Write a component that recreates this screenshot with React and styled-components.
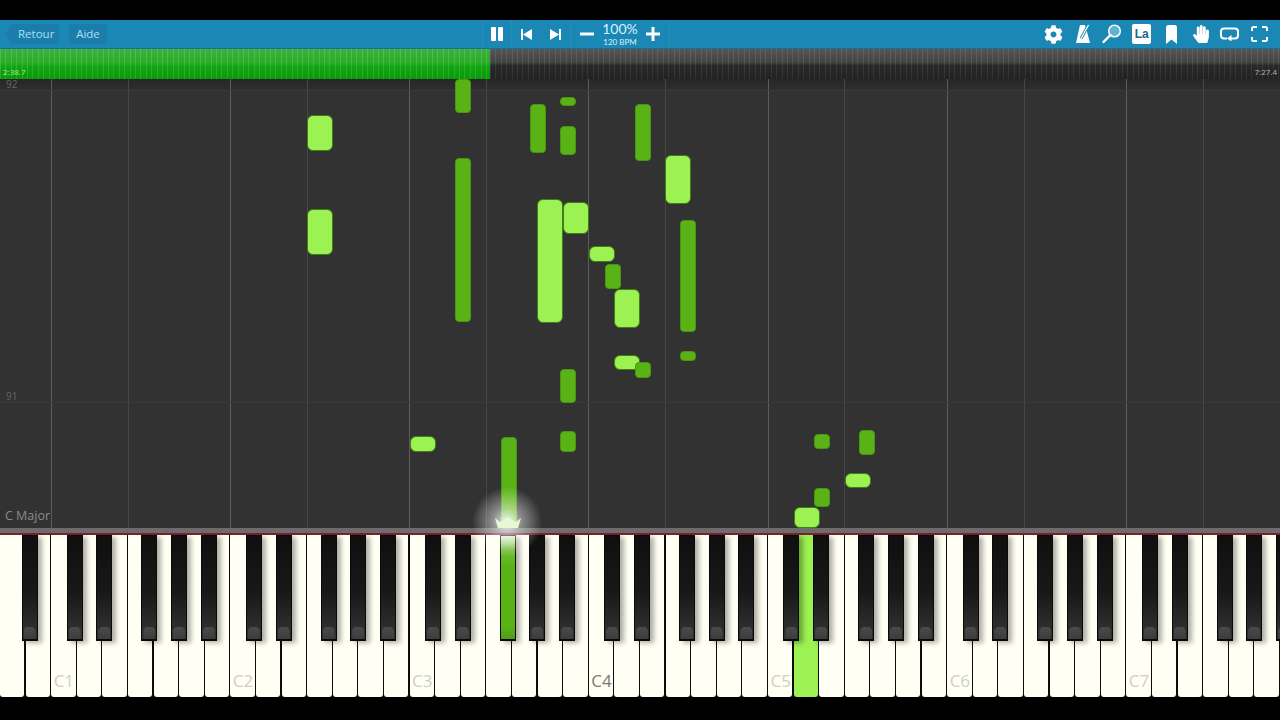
import React from 'react';
import styled, {createGlobalStyle} from 'styled-components';
import {FaCog, FaHandPaper} from 'react-icons/fa';

const WHITE_W = 25.6;
const OCTAVE = WHITE_W * 7;
const FIRST_C = WHITE_W * 2;
const CANVAS_TOP = 79;

const lightNotes = [
  [307, 115, 36], [307, 209, 46], [409.5, 436, 16], [537, 199, 124], [563, 202, 32],
  [588.5, 246, 16], [614, 289, 39], [614, 355, 15], [665, 155, 49], [793.5, 507, 21], [844.5, 473, 15],
];

const darkNotes = [
  [455, 79, 34], [455, 158, 164], [530, 104, 49], [559.5, 97, 9], [559.5, 126, 29],
  [634.5, 104, 57], [679.5, 220, 112], [604.5, 264, 25], [634.5, 362, 16], [679.5, 351, 10],
  [559.5, 369, 34], [559.5, 431, 21], [500.5, 437, 91], [814, 434, 15], [814, 488, 19], [859, 430, 25],
];

const blackOffsets = [15.4, 45.2, 90.2, 119.8, 149.6];
const blackKeys = [];
for (let o = -1; o < 7; o++) {
  blackOffsets.forEach(off => {
    const x = FIRST_C + o * OCTAVE + off;
    if (x > 0) blackKeys.push(x);
  });
}

const cLines = [0, 1, 2, 3, 4, 5, 6].map(o => FIRST_C + o * OCTAVE - 0.5);
const fLines = [0, 1, 2, 3, 4, 5, 6].map(o => FIRST_C + o * OCTAVE + WHITE_W * 3 - 0.5);

const labels = {2: 'C1', 9: 'C2', 16: 'C3', 23: 'C4', 30: 'C5', 37: 'C6', 44: 'C7'};

const App = () => {
  return (
    <Page>
      <GlobalStyle />
      <Letterbox $h={20} />
      <Toolbar>
        <LeftTools>
          <BackButton>Retour</BackButton>
          <HelpButton>Aide</HelpButton>
        </LeftTools>
        <CenterTools>
          <Cell $w={29}>
            <svg width="12" height="14" viewBox="0 0 12 14"><path d="M0 1a1 1 0 0 1 1-1h3a1 1 0 0 1 1 1v12a1 1 0 0 1-1 1H1a1 1 0 0 1-1-1zM7 1a1 1 0 0 1 1-1h3a1 1 0 0 1 1 1v12a1 1 0 0 1-1 1H8a1 1 0 0 1-1-1z" fill="#fff" /></svg>
          </Cell>
          <Cell $w={59} $gap={18}>
            <svg width="11" height="11" viewBox="0 0 11 11"><path d="M0 0h2v11H0zM11 0v11L2 5.5z" fill="#fff" /></svg>
            <svg width="11" height="11" viewBox="0 0 11 11"><path d="M9 0h2v11H9zM0 0v11l9-5.5z" fill="#fff" /></svg>
          </Cell>
          <Cell $w={99} $between>
            <svg width="14" height="14" viewBox="0 0 14 14"><rect y="5.5" width="14" height="3" rx=".5" fill="#fff" /></svg>
            <Tempo>
              <TempoValue>100%</TempoValue>
              <TempoBpm>120 BPM</TempoBpm>
            </Tempo>
            <svg width="14" height="14" viewBox="0 0 14 14"><path d="M5.5 0h3v5.5H14v3H8.500V14h-3V8.500H0v-3h5.500z" fill="#fff" /></svg>
          </Cell>
        </CenterTools>
        <RightTools>
          <ToolIcon><FaCog size={19} color="#fff" /></ToolIcon>
          <ToolIcon>
            <svg width="16" height="20" viewBox="0 0 16 20">
              <path d="M5 1h5l1 4-5.500 8 2 0L11.500 6 15 19H1z" fill="#fff" />
              <path d="M6 14.500 13.500 1" stroke="#1b87b4" strokeWidth="3" />
              <path d="M6 14.500 13.500 1" stroke="#fff" strokeWidth="1.300" />
            </svg>
          </ToolIcon>
          <ToolIcon>
            <svg width="20" height="20" viewBox="0 0 20 20">
              <circle cx="12.500" cy="7" r="5.800" fill="#5fb4d6" stroke="#fff" strokeWidth="1.500" />
              <path d="M8.300 11.200 1.500 18" stroke="#fff" strokeWidth="2.400" strokeLinecap="round" />
            </svg>
          </ToolIcon>
          <ToolIcon><LangBox>La</LangBox></ToolIcon>
          <ToolIcon>
            <svg width="11" height="19" viewBox="0 0 11 19"><path d="M0 2.500Q0 0 2.500 0h6Q11 0 11 2.500V19L5.500 14.500 0 19z" fill="#fff" /></svg>
          </ToolIcon>
          <ToolIcon><FaHandPaper size={18} color="#fff" /></ToolIcon>
          <ToolIcon>
            <svg width="19" height="14" viewBox="0 0 19 14" fill="none">
              <path d="M7 11.500H4Q1 11.500 1 8.500V4.500Q1 1.500 4 1.500h11Q18 1.500 18 4.500v4Q18 11.500 15 11.500h-4" stroke="#fff" strokeWidth="2" />
              <path d="M11.500 8v6.500L7 11.500z" fill="#fff" />
            </svg>
          </ToolIcon>
          <ToolIcon>
            <svg width="17" height="16" viewBox="0 0 17 16" fill="none" stroke="#fff" strokeWidth="2">
              <path d="M1 5V2.500Q1 1 2.500 1H6M11 1h3.500Q16 1 16 2.500V5M16 11v2.500q0 1.500-1.500 1.500H11M6 15H2.500Q1 15 1 13.500V11" />
            </svg>
          </ToolIcon>
        </RightTools>
      </Toolbar>
      <Progress>
        <Played><TimeLabel>2:38.7</TimeLabel></Played>
        <Remaining><TimeLabel $grey>7:27.4</TimeLabel></Remaining>
      </Progress>
      <Canvas>
        {cLines.map(x => <VLine key={x} $x={x} $strong />)}
        {fLines.map(x => <VLine key={x} $x={x} />)}
        <HLine $y={11} />
        <HLine $y={323} />
        <Measure $y={-1}>92</Measure>
        <Measure $y={311}>91</Measure>
        <KeySignature>C Major</KeySignature>
        {lightNotes.map(([x, y, h], i) => <LightNote key={i} $x={x} $y={y - CANVAS_TOP} $h={h} />)}
        {darkNotes.map(([x, y, h], i) => <DarkNote key={i} $x={x} $y={y - CANVAS_TOP} $h={h} />)}
        <Glow />
        <Sparkle width="26" height="11" viewBox="0 0 26 11">
          <path d="M0 1 5 5 8 3 13 0 18 3 21 5 26 1 23 11H3z" fill="#e6f8d4" />
        </Sparkle>
      </Canvas>
      <Rail />
      <Piano>
        <WhiteRow>
          {Array.from({length: 50}, (_, i) => (
            <WhiteKey key={i} $active={i === 31}>
              {labels[i] && <KeyLabel $dark={i === 23}>{labels[i]}</KeyLabel>}
            </WhiteKey>
          ))}
        </WhiteRow>
        {blackKeys.map(x => <BlackKey key={x} $x={x} $active={Math.abs(x - 499.8) < 1} />)}
      </Piano>
      <Letterbox $h={23} />
    </Page>
  );
};
export default App;

const GlobalStyle = createGlobalStyle`
  html, body {
    margin: 0;
    padding: 0;
    background: #000;
    overflow: hidden;
  }
`;

const Page = styled.div`
  width: 1280px;
  height: 720px;
  display: flex;
  flex-direction: column;
  font-family: "Open Sans", "Liberation Sans", sans-serif;
  overflow: hidden;
`;

const Letterbox = styled.div`
  height: ${p => p.$h}px;
  flex: none;
  background: #000;
`;

const Toolbar = styled.div`
  height: 29px;
  box-sizing: border-box;
  flex: none;
  display: flex;
  align-items: stretch;
  background: #1b87b4;
  border-bottom: 1px solid #17719a;
`;

const LeftTools = styled.div`
  width: 482px;
  flex: none;
  display: flex;
  align-items: center;
  gap: 10px;
  padding-left: 5px;
  box-sizing: border-box;
`;

const BackButton = styled.div`
  width: 54px;
  height: 20px;
  box-sizing: border-box;
  padding-left: 13px;
  background: #1c7dab;
  color: #a8e0f5;
  font-size: 11.500px;
  line-height: 20px;
  clip-path: polygon(7px 0, 100% 0, 100% 100%, 7px 100%, 0 50%);
`;

const HelpButton = styled.div`
  width: 38px;
  height: 20px;
  text-align: center;
  background: #1c7dab;
  border-radius: 2px;
  color: #a8e0f5;
  font-size: 11.500px;
  line-height: 20px;
`;

const CenterTools = styled.div`
  display: flex;
  align-items: stretch;
  border-left: 1px solid #258fbb;
`;

const Cell = styled.div`
  width: ${p => p.$w}px;
  box-sizing: border-box;
  display: flex;
  align-items: center;
  justify-content: ${p => (p.$between ? 'space-between' : 'center')};
  gap: ${p => p.$gap || 0}px;
  padding: ${p => (p.$between ? '0 9px 0 9px' : '0')};
  border-right: 1px solid #258fbb;
`;

const Tempo = styled.div`
  display: flex;
  flex-direction: column;
  align-items: center;
  color: #d8f2fc;
  font-family: Lato, "Open Sans", sans-serif;
`;

const TempoValue = styled.span`
  font-size: 14px;
  line-height: 16px;
`;

const TempoBpm = styled.span`
  font-size: 8px;
  line-height: 10px;
`;

const RightTools = styled.div`
  margin-left: auto;
  display: flex;
  align-items: center;
  padding-right: 6px;
`;

const ToolIcon = styled.div`
  width: 29.400px;
  height: 28px;
  display: flex;
  align-items: center;
  justify-content: center;
`;

const LangBox = styled.div`
  width: 19px;
  height: 20px;
  border-radius: 2px;
  background: #fff;
  color: #17698d;
  font-family: "Liberation Sans", sans-serif;
  font-size: 12px;
  font-weight: 700;
  line-height: 21px;
  text-align: center;
`;

const Progress = styled.div`
  height: 30px;
  flex: none;
  display: flex;
`;

const Played = styled.div`
  width: 490px;
  flex: none;
  display: flex;
  align-items: flex-end;
  padding: 0 0 1px 3px;
  box-sizing: border-box;
  background:
    repeating-linear-gradient(90deg, rgba(255, 255, 255, .1) 0 1px, rgba(0, 0, 0, .05) 1px 5.400px),
    linear-gradient(180deg, #3fb83f 0%, #2eb52e 45%, #12ad12 60%, #0aa00a 100%);
`;

const Remaining = styled.div`
  flex: 1;
  display: flex;
  align-items: flex-end;
  justify-content: flex-end;
  padding: 0 3px 1px 0;
  background:
    repeating-linear-gradient(90deg, rgba(255, 255, 255, .07) 0 1px, rgba(0, 0, 0, .06) 1px 5.400px),
    linear-gradient(180deg, #5a5a5a 0%, #474747 45%, #2b2b2b 55%, #232323 100%);
`;

const TimeLabel = styled.span`
  color: ${p => (p.$grey ? '#b5b5b5' : '#a8ea9c')};
  font-size: 8px;
  line-height: 12px;
`;

const Canvas = styled.div`
  position: relative;
  height: 449px;
  flex: none;
  background: linear-gradient(180deg, #262626 0, #323232 14px);
  z-index: 2;
`;

const VLine = styled.div`
  position: absolute;
  left: ${p => p.$x}px;
  top: 0;
  bottom: 0;
  width: 1px;
  background: ${p => (p.$strong ? '#5c5c5c' : '#464646')};
`;

const HLine = styled.div`
  position: absolute;
  left: 0;
  right: 0;
  top: ${p => p.$y}px;
  height: 1px;
  background: #3b3b3b;
`;

const Measure = styled.span`
  position: absolute;
  left: 6px;
  top: ${p => p.$y}px;
  color: #666;
  font-size: 10px;
  line-height: 12px;
`;

const KeySignature = styled.span`
  position: absolute;
  left: 5px;
  bottom: 4px;
  color: #8a8a8a;
  font-size: 12.500px;
  line-height: 16px;
`;

const LightNote = styled.div`
  position: absolute;
  left: ${p => p.$x}px;
  top: ${p => p.$y}px;
  width: 26px;
  height: ${p => p.$h}px;
  box-sizing: border-box;
  background: #9cf253;
  border: 1px solid #3f7f16;
  border-radius: 6px;
`;

const DarkNote = styled.div`
  position: absolute;
  left: ${p => p.$x}px;
  top: ${p => p.$y}px;
  width: 16px;
  height: ${p => p.$h}px;
  box-sizing: border-box;
  background: #5ab316;
  border: 1px solid #4a9612;
  border-radius: 4px;
`;

const Glow = styled.div`
  position: absolute;
  left: 472px;
  top: 408px;
  width: 70px;
  height: 70px;
  background: radial-gradient(circle closest-side, rgba(255, 255, 255, .9) 0%, rgba(255, 255, 255, .45) 40%, rgba(255, 255, 255, 0) 100%);
  pointer-events: none;
`;

const Sparkle = styled.svg`
  position: absolute;
  left: 495px;
  top: 438px;
`;

const Rail = styled.div`
  height: 7px;
  flex: none;
  position: relative;
  z-index: 1;
  background: linear-gradient(180deg, #6c6c6c 0, #6c6c6c 5px, #7d1d2e 5px, #7d1d2e 7px);
`;

const Piano = styled.div`
  position: relative;
  height: 162px;
  flex: none;
  background: #0c0c0c;
  overflow: hidden;
`;

const WhiteRow = styled.div`
  height: 100%;
  display: grid;
  grid-template-columns: repeat(50, 1fr);
`;

const WhiteKey = styled.div`
  position: relative;
  margin-right: 1.300px;
  display: flex;
  align-items: flex-end;
  justify-content: center;
  background: ${p => (p.$active ? '#9cf253' : '#fffff3')};
  border-radius: 0 0 3px 3px;
`;

const KeyLabel = styled.span`
  margin: 0 0 6px 1px;
  color: ${p => (p.$dark ? '#7a7a72' : '#cfcfc6')};
  font-size: 17px;
  line-height: 20px;
`;

const BlackKey = styled.div`
  position: absolute;
  top: 0;
  left: ${p => p.$x}px;
  width: 16px;
  height: 106px;
  box-sizing: border-box;
  border: 1px solid #0a0a0a;
  border-bottom-width: 2px;
  background: ${p =>
    p.$active
      ? 'linear-gradient(180deg, #d9eecb 0, #6fbb33 14px, #5ab316 30%, #5ab316 88%, #4f9a18 100%)'
      : 'linear-gradient(180deg, #0f0f0f 0, #181818 55%, #2c2c2c 86%, #2e2e2e 100%)'};
  box-shadow: 4px 2px 5px rgba(0, 0, 0, .32);

  &::after {
    content: '';
    display: ${p => (p.$active ? 'none' : 'block')};
    position: absolute;
    left: 1px;
    right: 1px;
    bottom: 0;
    height: 12px;
    background: linear-gradient(180deg, #4a4a4a 0, #3c3c3c 100%);
    clip-path: polygon(20% 0, 80% 0, 100% 25%, 100% 100%, 0 100%, 0 25%);
  }
`;
